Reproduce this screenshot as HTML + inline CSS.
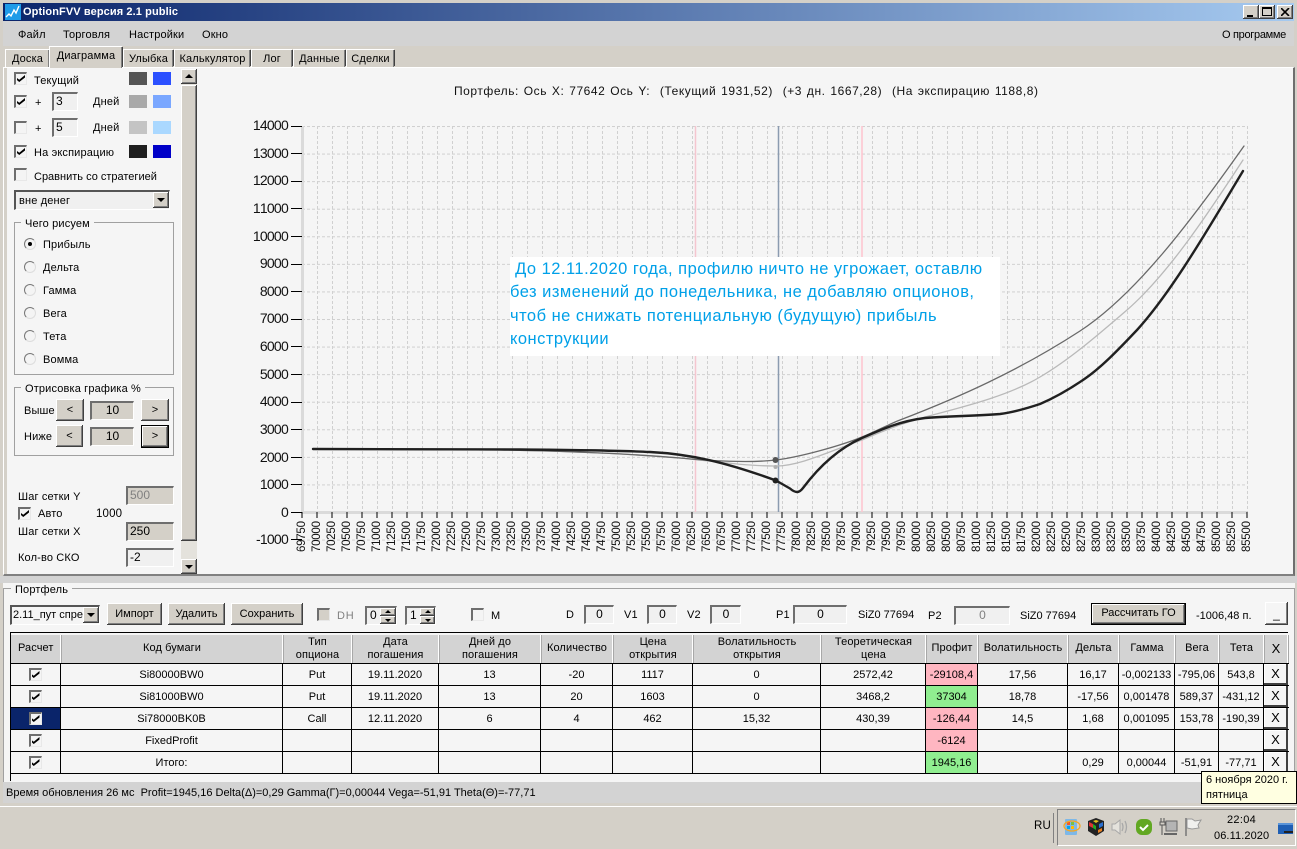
<!DOCTYPE html>
<html><head><meta charset="utf-8"><title>OptionFVV</title>
<style>
*{box-sizing:border-box}
html,body{margin:0;padding:0}
body{width:1297px;height:849px;overflow:hidden;position:relative;background:#d4d0c8;font:11px "Liberation Sans",sans-serif;color:#000}
.a,.t,.i,.b,.s,.c,.r{position:absolute}
.t{white-space:nowrap;line-height:14px;letter-spacing:.15px}
.i{background:#f0f0f0;border-style:solid;border-width:2px 1px 1px 2px;border-color:#6e6e6e #fff #fff #6e6e6e;font-size:12px;line-height:15px;padding-left:2px;white-space:nowrap;overflow:hidden}
.ctr{text-align:center;padding-left:0}
.gr{background:#d4d0c8}
.b{background:#d4d0c8;box-shadow:inset -1px -1px #404040,inset 1px 1px #fff,inset -2px -2px #808080;text-align:center;white-space:nowrap;font-size:11px;letter-spacing:0;line-height:22px}
.s{width:18px;height:13px}
.c{width:13px;height:13px;background:#f4f4f4;border-style:solid;border-width:2px 1px 1px 2px;border-color:#6e6e6e #e8e8e8 #e8e8e8 #6e6e6e}
.c.k::after{content:"";position:absolute;left:1px;top:1px;width:8px;height:7px;background:#000;clip-path:polygon(0 42%,28% 68%,100% 0,100% 36%,28% 100%,0 74%)}
.r{width:12px;height:12px;border-radius:50%;background:#f4f4f4;border:1.5px solid;border-color:#777 #ddd #ddd #777}
.r.k::after{content:"";position:absolute;left:2.5px;top:2.5px;width:4px;height:4px;border-radius:50%;background:#000}
.g{border:1px solid #a0a0a0}
.l{background:#f5f5f5;padding:0 4px;position:absolute;white-space:nowrap;line-height:14px;font-size:11px;letter-spacing:.15px}
.tab{position:absolute;top:49px;height:18px;background:#d4d0c8;border-left:1px solid #fff;box-shadow:inset -1px 0 #808080,2px 0 0 -1px #404040;border-top:1px solid #fff;text-align:center;line-height:18px;letter-spacing:.15px;white-space:nowrap}
table{border-collapse:collapse;table-layout:fixed;position:absolute}
.rows td{border:1px solid #000;height:22px;padding:0;text-align:center;font-size:11px;position:relative;white-space:nowrap;overflow:hidden}
.rows td:last-child{border-right:0}
.hd td{height:28px;padding:0;background:#d3d3d3;text-align:center;font-size:11px;line-height:13px;letter-spacing:.1px;border-right:1px solid #a8a8a8;box-shadow:inset -1px 0 #fff;border-bottom:1px solid #a0a0a0;overflow:hidden}
.pk{background:#ffb6c1}.gn{background:#90ee90}
.x{display:block;position:absolute;left:0;top:0;width:24px;height:21px;background:#f5f5f5;box-shadow:inset -2px -2px #404040,inset 1px 1px #fff;line-height:19px;font-size:13px;padding-right:1px}
.cc{position:absolute;left:50%;top:4px;margin-left:-7px}
.xl{position:absolute;left:294.5px;top:522px;display:flex;height:30px}
.xl span{width:15px;writing-mode:vertical-rl;transform:rotate(180deg);font-size:11.5px;line-height:15px;letter-spacing:-.25px;text-align:left;color:#111;height:30px}
.yl{position:absolute;left:230px;width:58px;text-align:right;font-size:14px;line-height:16px;letter-spacing:-.75px;color:#111;font-kerning:none}
.tk{position:absolute;left:291px;width:11px;height:1px;background:#000}
</style></head><body>

<!-- title bar -->
<div class="a" style="left:3px;top:3px;width:1291px;height:18px;background:linear-gradient(90deg,#0a246a,#a6caf0)"></div>
<svg class="a" style="left:5px;top:4px" width="16" height="16" viewBox="0 0 16 16"><rect width="16" height="16" fill="#1e9be8"/><path d="M1 13l3-3 2 2 3-6 2 3 3-7" fill="none" stroke="#fff" stroke-width="1.4"/></svg>
<div class="t" style="left:23px;top:5px;color:#fff;font-weight:bold;font-size:11px;letter-spacing:.1px">OptionFVV версия 2.1 public</div>
<div class="b" style="left:1243px;top:5px;width:16px;height:14px"><div class="a" style="left:4px;top:10px;width:6px;height:2px;background:#000"></div></div>
<div class="b" style="left:1259px;top:5px;width:16px;height:14px"><div class="a" style="left:3px;top:2px;width:10px;height:9px;border:1px solid #000;border-top-width:2px"></div></div>
<div class="b" style="left:1277px;top:5px;width:16px;height:14px"><svg class="a" style="left:4px;top:3px" width="9" height="8"><path d="M0 0l8 8M8 0l-8 8" stroke="#000" stroke-width="1.6"/></svg></div>

<!-- menu -->
<div class="a" style="left:3px;top:21px;width:1291px;height:25px;background:#d3d3d3"></div>
<div class="t" style="left:18px;top:28px">Файл</div>
<div class="t" style="left:63px;top:28px">Торговля</div>
<div class="t" style="left:129px;top:28px">Настройки</div>
<div class="t" style="left:202px;top:28px">Окно</div>
<div class="t" style="left:1222px;top:28px;letter-spacing:-.3px">О программе</div>

<!-- panel -->
<div class="a" style="left:3px;top:67px;width:1292px;height:509px;background:#f5f5f5;border-top:1px solid #fff;border-left:1px solid #fff;border-right:2px solid #6e6e6e;border-bottom:2px solid #808080"></div>

<!-- tabs -->
<div class="tab" style="left:5px;width:44px">Доска</div>
<div class="tab" style="left:49px;width:73px;top:46px;height:22px;background:#d4d0c8;line-height:19px;z-index:2">Диаграмма</div>
<div class="tab" style="left:123px;width:50px">Улыбка</div>
<div class="tab" style="left:174px;width:76px">Калькулятор</div>
<div class="tab" style="left:251px;width:41px">Лог</div>
<div class="tab" style="left:293px;width:52px">Данные</div>
<div class="tab" style="left:346px;width:48px">Сделки</div>

<!-- left panel -->
<div class="a" style="left:4px;top:68px;width:3px;height:506px;background:#d4d0c8"></div>
<div class="c k" style="left:14px;top:72px"></div><div class="t" style="left:34px;top:74px">Текущий</div>
<div class="s" style="left:129px;top:72px;background:#555"></div><div class="s" style="left:153px;top:72px;background:#2b50ff"></div>

<div class="c k" style="left:14px;top:95px"></div><div class="t" style="left:35px;top:96px">+</div>
<div class="i" style="left:52px;top:92px;width:26px;height:19px">3</div><div class="t" style="left:93px;top:95px">Дней</div>
<div class="s" style="left:129px;top:95px;background:#a9a9a9"></div><div class="s" style="left:153px;top:95px;background:#7aa7ff"></div>

<div class="c" style="left:14px;top:121px"></div><div class="t" style="left:35px;top:122px">+</div>
<div class="i" style="left:52px;top:118px;width:26px;height:19px">5</div><div class="t" style="left:93px;top:121px">Дней</div>
<div class="s" style="left:129px;top:121px;background:#c4c4c4"></div><div class="s" style="left:153px;top:121px;background:#aad8ff"></div>

<div class="c k" style="left:14px;top:145px"></div><div class="t" style="left:34px;top:146px">На экспирацию</div>
<div class="s" style="left:129px;top:145px;background:#1e1e1e"></div><div class="s" style="left:153px;top:145px;background:#0000c8"></div>

<div class="c" style="left:14px;top:168px"></div><div class="t" style="left:34px;top:170px;letter-spacing:0">Сравнить со стратегией</div>

<div class="i" style="left:14px;top:190px;width:156px;height:20px;font-size:11px;padding-left:3px;border-color:#555 #fff #fff #555;line-height:18px;letter-spacing:.15px">вне денег</div>
<div class="b" style="left:153px;top:192px;width:16px;height:16px"><div class="a" style="left:4px;top:6px;border:4px solid transparent;border-top:4px solid #000;border-bottom:0"></div></div>

<div class="g a" style="left:14px;top:222px;width:160px;height:153px"></div>
<div class="l" style="left:21px;top:217px">Чего рисуем</div>
<div class="r k" style="left:24px;top:238px"></div><div class="t" style="left:43px;top:238px">Прибыль</div>
<div class="r" style="left:24px;top:261px"></div><div class="t" style="left:43px;top:261px">Дельта</div>
<div class="r" style="left:24px;top:284px"></div><div class="t" style="left:43px;top:284px">Гамма</div>
<div class="r" style="left:24px;top:307px"></div><div class="t" style="left:43px;top:307px">Вега</div>
<div class="r" style="left:24px;top:330px"></div><div class="t" style="left:43px;top:330px">Тета</div>
<div class="r" style="left:24px;top:353px"></div><div class="t" style="left:43px;top:353px">Вомма</div>

<div class="g a" style="left:14px;top:387px;width:160px;height:69px"></div>
<div class="l" style="left:21px;top:382px">Отрисовка графика %</div>
<div class="t" style="left:24px;top:404px">Выше</div>
<div class="b" style="left:56px;top:399px;width:28px;height:22px">&lt;</div>
<div class="i gr ctr" style="left:90px;top:401px;width:44px;height:19px">10</div>
<div class="b" style="left:141px;top:399px;width:28px;height:22px">&gt;</div>
<div class="t" style="left:24px;top:430px">Ниже</div>
<div class="b" style="left:56px;top:425px;width:27px;height:22px">&lt;</div>
<div class="i gr ctr" style="left:90px;top:427px;width:44px;height:19px">10</div>
<div class="b" style="left:141px;top:425px;width:28px;height:23px;border:1px solid #000;line-height:20px">&gt;</div>

<div class="t" style="left:18px;top:490px">Шаг сетки Y</div>
<div class="i gr" style="left:126px;top:486px;width:48px;height:19px;color:#808080">500</div>
<div class="c k" style="left:18px;top:507px"></div><div class="t" style="left:38px;top:507px">Авто</div><div class="t" style="left:96px;top:507px;font-size:11.5px">1000</div>
<div class="t" style="left:18px;top:525px">Шаг сетки X</div>
<div class="i gr" style="left:126px;top:522px;width:48px;height:19px">250</div>
<div class="t" style="left:18px;top:551px">Кол-во СКО</div>
<div class="i" style="left:126px;top:548px;width:48px;height:19px">-2</div>
<div class="a" style="left:126px;top:574px;width:48px;height:1px;background:#808080"></div>

<!-- scrollbar -->
<div class="a" style="left:181px;top:69px;width:16px;height:505px;background:#e4e2dc"></div>
<div class="b" style="left:181px;top:69px;width:16px;height:15px"><div class="a" style="left:4px;top:5px;border:4px solid transparent;border-bottom:4px solid #000;border-top:0"></div></div>
<div class="b" style="left:181px;top:85px;width:16px;height:456px"></div>
<div class="b" style="left:181px;top:559px;width:16px;height:15px"><div class="a" style="left:4px;top:6px;border:4px solid transparent;border-top:4px solid #000;border-bottom:0"></div></div>

<!-- chart -->
<div class="t" style="left:454px;top:84px;font-size:12px;letter-spacing:.55px;word-spacing:1px;white-space:pre;color:#111">Портфель: Ось X: 77642 Ось Y:  (Текущий 1931,52)  (+3 дн. 1667,28)  (На экспирацию 1188,8)</div>

<svg class="a" style="left:0;top:0" width="1297" height="600" viewBox="0 0 1297 600">
<defs>
<pattern id="vg" x="302" y="126" width="15" height="5" patternUnits="userSpaceOnUse"><rect x="0" y="0" width="1" height="3" fill="#d0d0d0"/></pattern>
<pattern id="hg" x="302" y="126" width="5" height="27.571" patternUnits="userSpaceOnUse"><rect x="0" y="0" width="3" height="1" fill="#d0d0d0"/></pattern>
</defs>
<rect x="317" y="126" width="931" height="386" fill="url(#vg)"/>
<rect x="302" y="126" width="945" height="415" fill="url(#hg)"/>
<rect x="301" y="126" width="3" height="387" fill="#dadada"/>
<rect x="301" y="511" width="946" height="3" fill="#dadada"/>
<path d="M695.5 126V512" stroke="#f5c6cf" stroke-width="1.5"/>
<path d="M862 126V512" stroke="#ffc4cf" stroke-width="1.5"/>
<path d="M778.5 126V512" stroke="#8b9bb0" stroke-width="1.5"/>
<path d="M317 512v6M332 512v6M347 512v6M362 512v6M377 512v6M392 512v6M407 512v6M422 512v6M437 512v6M452 512v6M467 512v6M482 512v6M497 512v6M512 512v6M527 512v6M542 512v6M557 512v6M572 512v6M587 512v6M602 512v6M617 512v6M632 512v6M647 512v6M662 512v6M677 512v6M692 512v6M707 512v6M722 512v6M737 512v6M752 512v6M767 512v6M782 512v6M797 512v6M812 512v6M827 512v6M842 512v6M857 512v6M872 512v6M887 512v6M902 512v6M917 512v6M932 512v6M947 512v6M962 512v6M977 512v6M992 512v6M1007 512v6M1022 512v6M1037 512v6M1052 512v6M1067 512v6M1082 512v6M1097 512v6M1112 512v6M1127 512v6M1142 512v6M1157 512v6M1172 512v6M1187 512v6M1202 512v6M1217 512v6M1232 512v6M1247 512v6M302 512v6" stroke="#000"/>
<g fill="none" stroke-linejoin="round" stroke-linecap="round">
<path stroke="#b9b9b9" stroke-width="1.3" d="M313 449L500 450C560 451,620 453,680 458C710 461,745 466,776 466C800 466,830 451,862 440C880 432,900 424,925 417C950 410,1005 398,1040 377C1069 360,1098 335,1127 310C1166 276,1204 220,1243 160"/>
<path stroke="#696969" stroke-width="1.3" d="M313 449L500 450C560 451,620 453,680 458C710 461,750 463,776 460C800 457,840 446,862 437C875 432,887 425,900 420C960 397,1020 370,1080 331C1135 295,1189 224,1244 146"/>
<path stroke="#202020" stroke-width="2.4" d="M313 449L520 449.5C580 450,620 450.500,650 452C690 454,725 462,776 480.500L790 488.500Q794 492,797 492Q800 492,803 488C815 472,835 450,862 438C880 430,900 421,925 418C950 416,975 416,1000 414C1015 412,1028 408,1040 404C1054 398,1069 389.500,1083 380C1101 368,1119 349,1137 330C1172 291.500,1208 229,1243 171"/>
</g>
<circle cx="775.500" cy="460" r="3" fill="#555"/>
<circle cx="775.500" cy="467" r="2" fill="#b0b0b0"/>
<circle cx="775.500" cy="480.500" r="3" fill="#202020"/>
</svg>

<div class="tk" style="top:126px"></div><div class="tk" style="top:153px"></div><div class="tk" style="top:181px"></div><div class="tk" style="top:208px"></div><div class="tk" style="top:236px"></div><div class="tk" style="top:264px"></div><div class="tk" style="top:291px"></div><div class="tk" style="top:319px"></div><div class="tk" style="top:346px"></div><div class="tk" style="top:374px"></div><div class="tk" style="top:402px"></div><div class="tk" style="top:429px"></div><div class="tk" style="top:457px"></div><div class="tk" style="top:484px"></div><div class="tk" style="top:512px"></div><div class="tk" style="top:539px"></div>
<div class="yl" style="top:117px">14000</div><div class="yl" style="top:145px">13000</div><div class="yl" style="top:172px">12000</div><div class="yl" style="top:200px">11000</div><div class="yl" style="top:228px">10000</div><div class="yl" style="top:255px">9000</div><div class="yl" style="top:283px">8000</div><div class="yl" style="top:310px">7000</div><div class="yl" style="top:338px">6000</div><div class="yl" style="top:366px">5000</div><div class="yl" style="top:393px">4000</div><div class="yl" style="top:421px">3000</div><div class="yl" style="top:449px">2000</div><div class="yl" style="top:476px">1000</div><div class="yl" style="top:504px">0</div><div class="yl" style="top:531px">-1000</div>

<div class="xl"><span>69750</span><span>70000</span><span>70250</span><span>70500</span><span>70750</span><span>71000</span><span>71250</span><span>71500</span><span>71750</span><span>72000</span><span>72250</span><span>72500</span><span>72750</span><span>73000</span><span>73250</span><span>73500</span><span>73750</span><span>74000</span><span>74250</span><span>74500</span><span>74750</span><span>75000</span><span>75250</span><span>75500</span><span>75750</span><span>76000</span><span>76250</span><span>76500</span><span>76750</span><span>77000</span><span>77250</span><span>77500</span><span>77750</span><span>78000</span><span>78250</span><span>78500</span><span>78750</span><span>79000</span><span>79250</span><span>79500</span><span>79750</span><span>80000</span><span>80250</span><span>80500</span><span>80750</span><span>81000</span><span>81250</span><span>81500</span><span>81750</span><span>82000</span><span>82250</span><span>82500</span><span>82750</span><span>83000</span><span>83250</span><span>83500</span><span>83750</span><span>84000</span><span>84250</span><span>84500</span><span>84750</span><span>85000</span><span>85250</span><span>85500</span></div>

<!-- annotation -->
<div class="a" style="left:510px;top:257px;width:490px;height:99px;background:#fff"></div>
<div class="t" style="left:510px;top:258px;color:#00a0e8;font-size:16.500px;line-height:23.300px;white-space:pre;letter-spacing:.48px"> До 12.11.2020 года, профилю ничто не угрожает, оставлю
без изменений до понедельника, не добавляю опционов,
чтоб не снижать потенциальную (будущую) прибыль
конструкции</div>

<!-- bottom panel -->
<div class="a" style="left:0;top:576px;width:1297px;height:7px;background:#d3d3d3"></div>
<div class="a" style="left:3px;top:583px;width:1292px;height:199px;background:#f5f5f5"></div>
<div class="a" style="left:3px;top:588px;width:1292px;height:194px;border:1px solid #a0a0a0;border-bottom:0"></div>
<div class="l" style="left:11px;top:583px">Портфель</div>

<div class="i" style="left:10px;top:605px;width:90px;height:20px;border-color:#555 #fff #fff #555;background:#f5f5f5;font-size:11px;padding-left:1px;line-height:17px">2.11_пут спре</div>
<div class="b" style="left:83px;top:607px;width:16px;height:16px"><div class="a" style="left:4px;top:6px;border:4px solid transparent;border-top:4px solid #000;border-bottom:0"></div></div>
<div class="b" style="left:107px;top:603px;width:55px;height:22px">Импорт</div>
<div class="b" style="left:168px;top:603px;width:57px;height:22px">Удалить</div>
<div class="b" style="left:231px;top:603px;width:72px;height:22px">Сохранить</div>
<div class="c" style="left:317px;top:608px;background:#d4d0c8"></div><div class="t" style="left:337px;top:609px;color:#808080;letter-spacing:.8px">DH</div>
<div class="i" style="left:365px;top:606px;width:32px;height:19px;padding-left:3px">0</div>
<div class="b" style="left:380px;top:608px;width:16px;height:8px"></div><div class="b" style="left:380px;top:616px;width:16px;height:8px"></div>
<svg class="a" style="left:385px;top:610px" width="6" height="12"><path d="M3 0l3 3H0zM0 9h6l-3 3z" fill="#000"/></svg>
<div class="i" style="left:405px;top:606px;width:31px;height:19px;padding-left:3px">1</div>
<div class="b" style="left:420px;top:608px;width:15px;height:8px"></div><div class="b" style="left:420px;top:616px;width:15px;height:8px"></div>
<svg class="a" style="left:425px;top:610px" width="6" height="12"><path d="M3 0l3 3H0zM0 9h6l-3 3z" fill="#000"/></svg>
<div class="c" style="left:471px;top:608px"></div><div class="t" style="left:491px;top:609px">М</div>
<div class="t" style="left:566px;top:608px">D</div><div class="i ctr" style="left:584px;top:605px;width:30px;height:19px">0</div>
<div class="t" style="left:624px;top:608px">V1</div><div class="i ctr" style="left:647px;top:605px;width:30px;height:19px">0</div>
<div class="t" style="left:687px;top:608px">V2</div><div class="i ctr" style="left:710px;top:605px;width:31px;height:19px">0</div>
<div class="t" style="left:776px;top:608px">P1</div><div class="i ctr" style="left:793px;top:605px;width:54px;height:19px">0</div>
<div class="t" style="left:858px;top:608px;letter-spacing:0">SiZ0 77694</div>
<div class="t" style="left:928px;top:609px">P2</div><div class="i ctr" style="left:954px;top:606px;width:56px;height:19px;color:#808080">0</div>
<div class="t" style="left:1020px;top:609px;letter-spacing:0">SiZ0 77694</div>
<div class="b" style="left:1091px;top:603px;width:95px;height:22px;border:1px solid #000;line-height:18px">Рассчитать ГО</div>
<div class="t" style="left:1196px;top:609px;letter-spacing:0">-1006,48 п.</div>
<div class="b" style="left:1265px;top:602px;width:23px;height:23px;background:#f5f5f5;line-height:24px;font-size:12px">_</div>

<!-- grid -->
<div class="a" style="left:10px;top:632px;width:1278px;height:1px;background:#000"></div>
<div class="a" style="left:10px;top:632px;width:1px;height:149px;background:#000"></div>
<table class="hd" style="left:11px;top:635px;width:1277px">
<colgroup><col style="width:50px"><col style="width:222px"><col style="width:69px"><col style="width:87px"><col style="width:102px"><col style="width:72px"><col style="width:80px"><col style="width:128px"><col style="width:105px"><col style="width:52px"><col style="width:90px"><col style="width:51px"><col style="width:56px"><col style="width:44px"><col style="width:45px"><col style="width:24px"></colgroup>
<tr><td>Расчет</td><td>Код бумаги</td><td>Тип<br>опциона</td><td>Дата<br>погашения</td><td>Дней до<br>погашения</td><td>Количество</td><td>Цена<br>открытия</td><td>Волатильность<br>открытия</td><td>Теоретическая<br>цена</td><td>Профит</td><td>Волатильность</td><td>Дельта</td><td>Гамма</td><td>Вега</td><td>Тета</td><td style="font-size:13px">X</td></tr>
</table>
<table class="rows" style="left:10px;top:663px;width:1278px;background:#f5f5f5">
<colgroup><col style="width:50px"><col style="width:222px"><col style="width:69px"><col style="width:87px"><col style="width:102px"><col style="width:72px"><col style="width:80px"><col style="width:128px"><col style="width:105px"><col style="width:52px"><col style="width:90px"><col style="width:51px"><col style="width:56px"><col style="width:44px"><col style="width:45px"><col style="width:25px"></colgroup>
<tr><td><i class="c k cc"></i></td><td>Si80000BW0</td><td>Put</td><td>19.11.2020</td><td>13</td><td>-20</td><td>1117</td><td>0</td><td>2572,42</td><td class="pk">-29108,4</td><td>17,56</td><td>16,17</td><td>-0,002133</td><td>-795,06</td><td>543,8</td><td><span class="x">X</span></td></tr>
<tr><td><i class="c k cc"></i></td><td>Si81000BW0</td><td>Put</td><td>19.11.2020</td><td>13</td><td>20</td><td>1603</td><td>0</td><td>3468,2</td><td class="gn">37304</td><td>18,78</td><td>-17,56</td><td>0,001478</td><td>589,37</td><td>-431,12</td><td><span class="x">X</span></td></tr>
<tr><td style="background:#0a246a"><i class="c k cc"></i></td><td>Si78000BK0B</td><td>Call</td><td>12.11.2020</td><td>6</td><td>4</td><td>462</td><td>15,32</td><td>430,39</td><td class="pk">-126,44</td><td>14,5</td><td>1,68</td><td>0,001095</td><td>153,78</td><td>-190,39</td><td><span class="x">X</span></td></tr>
<tr><td><i class="c k cc"></i></td><td>FixedProfit</td><td></td><td></td><td></td><td></td><td></td><td></td><td></td><td class="pk">-6124</td><td></td><td></td><td></td><td></td><td></td><td><span class="x">X</span></td></tr>
<tr><td><i class="c k cc"></i></td><td>Итого:</td><td></td><td></td><td></td><td></td><td></td><td></td><td></td><td class="gn">1945,16</td><td></td><td>0,29</td><td>0,00044</td><td>-51,91</td><td>-77,71</td><td><span class="x">X</span></td></tr>
</table>

<!-- status -->
<div class="a" style="left:3px;top:782px;width:1294px;height:21px;background:#d3d3d3"></div>
<div class="t" style="left:6px;top:786px;white-space:pre;letter-spacing:0">Время обновления 26 мс  Profit=1945,16 Delta(Δ)=0,29 Gamma(Г)=0,00044 Vega=-51,91 Theta(Θ)=-77,71</div>
<div class="a" style="left:0;top:806px;width:1297px;height:1px;background:#fff"></div>

<!-- taskbar -->
<div class="t" style="left:1034px;top:819px;font-size:11.500px">RU</div>
<div class="a" style="left:1053px;top:813px;width:1px;height:30px;background:#808080"></div>
<div class="a" style="left:1057px;top:809px;width:239px;height:37px;border:1px solid;border-color:#808080 #fff #fff #808080"></div>
<svg class="a" style="left:1062px;top:817px" width="234" height="20" viewBox="0 0 234 20">
<rect x="3" y="2" width="12" height="16" rx="1" fill="#7db8e8"/><rect x="5" y="5" width="3" height="3" fill="#f05a28"/><rect x="9" y="5" width="3" height="3" fill="#7ac143"/><rect x="5" y="9" width="3" height="3" fill="#00a4ef"/><rect x="9" y="9" width="3" height="3" fill="#ffb900"/><ellipse cx="10" cy="9" rx="8" ry="5" fill="none" stroke="#f5a623" stroke-width="1.3"/>
<path d="M34 1l8 3v10l-8 5-8-5V4z" fill="#222"/><path d="M27 5l4 2v4l-4-2z" fill="#d33"/><path d="M31 7l3 2v4l-3-2z" fill="#2a2"/><path d="M37 7l4-2v4l-4 2z" fill="#2a6fd0"/><path d="M34 3l3 1-3 2-3-2z" fill="#e8c020"/><path d="M36 13l4-2v3l-4 2z" fill="#e88020"/>
<path d="M50 7h3l5-4v14l-5-4h-3z" fill="#e4e2dc" stroke="#a8a8a8"/><path d="M60 6q2 4 0 8M63 4q3 6 0 12" fill="none" stroke="#a8a8a8" stroke-width="1.3"/>
<rect x="74" y="2" width="16" height="16" rx="6" fill="#62a822"/><path d="M78 10l3 3 5-5" fill="none" stroke="#fff" stroke-width="2"/>
<rect x="104" y="4" width="11" height="10" fill="#b4b4b4" stroke="#666"/><path d="M99 1v4M102 1v4M98 5h5v3h-5zM100 8v10" fill="none" stroke="#555"/><path d="M102 17h13" stroke="#666" stroke-width="2"/>
<path d="M124 1v18" stroke="#777" stroke-width="1.500"/><path d="M125 2h5l3 2 6-1-3 5 1 3-7 1-5-1z" fill="#f0f0ee" stroke="#999"/>
<rect x="216" y="6" width="15" height="11" fill="#1f5fb4"/><rect x="216" y="6" width="15" height="2" fill="#5a94d8"/><rect x="222" y="14" width="9" height="2" fill="#222"/>
</svg>
<div class="t" style="left:1227px;top:813px;font-size:11px;letter-spacing:.3px">22:04</div>
<div class="t" style="left:1214px;top:829px;font-size:11px;letter-spacing:.1px">06.11.2020</div>

<!-- tooltip -->
<div class="a" style="left:1201px;top:771px;width:96px;height:33px;background:#ffffe1;border:1px solid #000;z-index:5"></div>
<div class="t" style="left:1206px;top:773px;z-index:6;line-height:15px;letter-spacing:0">6 ноября 2020 г.<br>пятница</div>
</body></html>
